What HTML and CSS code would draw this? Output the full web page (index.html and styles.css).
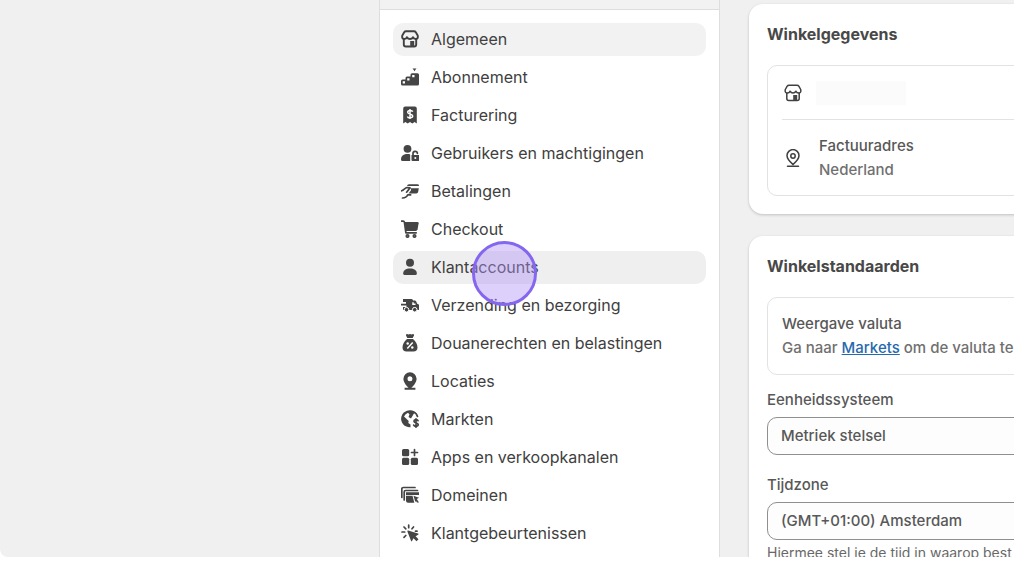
FILE: index.html
```html
<!DOCTYPE html>
<html lang="nl">
<head>
    <meta charset="UTF-8">
    <meta name="viewport" content="width=device-width, initial-scale=1.0">
    <title>Instellingen</title>
    <link rel="stylesheet" href="styles.css">
</head>
<body>

    <div class="frame">
        <!-- Navigatie -->
        <aside class="sidebar">
            <div class="sidebar-top"></div>
            <nav class="menu">
                <a class="item active" href="#">
                    <svg class="icon outline" viewBox="0 0 18 18"><path d="M5 1.200h8q1.200 0 1.800 1L16.700 5.500Q17.400 8.800 15 9q-2.200.2-3-1.800-1 1.800-3 1.800T6 7.200Q5.200 9.200 3 9 .6 8.800 1.300 5.500L3.200 2.200q.6-1 1.800-1z"/><path d="M2.800 9v5.500a2 2 0 0 0 2 2h8.400a2 2 0 0 0 2-2V9"/><path class="solid" d="M9.200 11h4v5.500h-4z"/></svg>
                    Algemeen
                </a>
                <a class="item" href="#">
                    <svg class="icon" viewBox="0 0 18 18"><path fill-rule="evenodd" d="M0 13q0-1.500 1.500-1.500h3V10q0-1.500 1.500-1.500h3.500V6.800q0-1.500 1.500-1.500h5.500q1.500 0 1.500 1.500V16q0 1.500-1.500 1.500h-15Q0 17.500 0 16zM1.700 13.200v2.300h2.300v-2.300zM6.200 10.200v2.300h2.300v-2.300zM11.200 7v2.300h2.300V7z"/><path d="M11.500.2q2 .8 4 0L13.500 3.200z"/></svg>
                    Abonnement
                </a>
                <a class="item" href="#">
                    <svg class="icon" viewBox="0 0 18 18"><path d="M2.200 2.500q0-2 2-2h9.600q2 0 2 2V17.500l-2.300-1.500L11.300 17.500 9 16l-2.300 1.500L4.500 16l-2.300 1.500z"/><path class="cut" d="M11.700 5.800C11.200 3.900 6.700 3.900 6.700 6.300c0 2.600 5 1.300 5 3.800 0 2.300-4.700 2.300-5.300.4M9 3v10"/></svg>
                    Facturering
                </a>
                <a class="item" href="#">
                    <svg class="icon" viewBox="0 0 18 18"><circle cx="6.500" cy="4.800" r="3.900"/><path d="M0 15.500C0 11.500 3 10 6.500 10c1.200 0 2 .1 2.700.5V17H1.500Q0 17 0 15.500z"/><path d="M10.500 11h7q.8 0 .8.800V16q0 1-1 1h-5.800q-1 0-1-1z"/><path class="line" d="M12 11V9.700a2.200 2.200 0 0 1 4.400-.4"/><circle class="hole" cx="14.300" cy="14" r="1"/></svg>
                    Gebruikers en machtigingen
                </a>
                <a class="item" href="#">
                    <svg class="icon" viewBox="0 0 18 18"><path d="M6 4Q6.300 2.200 8 2.200h8.500q1.700 0 1.400 1.800zM9.200 6.200h8.600l-.6 3.600q-.3 1.700-2 1.700H7.500l2.200-2.700q1-1.600-.5-2.600z"/><path class="line" d="M.6 8.800C3 7.800 4 5.800 6 5.500l3 .4-3.400 4.300M1.500 16c2.300 0 4.300-1 5.200-3.200h3"/></svg>
                    Betalingen
                </a>
                <a class="item" href="#">
                    <svg class="icon" viewBox="0 0 18 18"><path d="M3.500 2h13q1.300 0 1.100 1.300l-1 6q-.3 1.700-2 1.700H5z"/><path class="line" d="M.5 1.200h1.700q1 0 1.200 1l1.500 10.600h10.300"/><circle class="line" cx="6.500" cy="16" r="1.200"/><circle class="line" cx="13.500" cy="16" r="1.200"/></svg>
                    Checkout
                </a>
                <a class="item hover" href="#">
                    <svg class="icon" viewBox="0 0 18 18"><circle cx="9" cy="4.800" r="4"/><path d="M2.200 15.500C2.200 12 5 10.500 9 10.500s6.800 1.500 6.800 5q0 1.500-1.500 1.500H3.700q-1.500 0-1.500-1.500z"/></svg>
                    Klantaccounts
                    <span class="click-marker"></span>
                </a>
                <a class="item" href="#">
                    <svg class="icon" viewBox="0 0 18 18"><path d="M2 3h8.500Q12 3 12 4.500h1.800q1 0 1.400 1l1 2.200 1.500.8q.8.400.8 1.200v2.800q0 1.500-1.500 1.500H2V11h3.500V9.600H0V7.800h5V6H2z"/><path class="gap" d="M12 6.300v2h2.500"/><circle class="wheel" cx="5.500" cy="13.700" r="2.300"/><circle class="wheel" cx="13.700" cy="13.700" r="2.300"/></svg>
                    Verzending en bezorging
                </a>
                <a class="item" href="#">
                    <svg class="icon" viewBox="0 0 18 18"><path d="M5 1.500Q4.500 0 6 0q1.500.8 3 0 1.500.8 3 0 1.500 0 1 1.500L11.700 4H6.300zM6 5h6c2.500 2 4.500 5 4.500 8.500 0 2.500-1.500 4-4 4h-7c-2.500 0-4-1.500-4-4C1.500 10 3.500 7 6 5z"/><path class="gap" d="M11.700 8.500l-5.400 6"/><circle class="hole" cx="6.700" cy="9.500" r="1.200"/><circle class="hole" cx="11.300" cy="13.500" r="1.200"/></svg>
                    Douanerechten en belastingen
                </a>
                <a class="item" href="#">
                    <svg class="icon" viewBox="0 0 18 18"><path fill-rule="evenodd" d="M9 .2a6.600 6.600 0 0 1 6.600 6.600c0 4-4 8-5.200 9h4v1.900H3.600v-1.900h4c-1.200-1-5.200-5-5.200-9A6.600 6.600 0 0 1 9 .2zM9 4.300a2.500 2.500 0 1 0 0 5 2.500 2.500 0 0 0 0-5z"/></svg>
                    Locaties
                </a>
                <a class="item" href="#">
                    <svg class="icon" viewBox="0 0 18 18"><path fill-rule="evenodd" d="M13.800 2A8.500 8.500 0 1 0 9.500 17.200V14.500L7.300 13l.4-2L3 6.500Q4.300 3.700 7 2.800l1.500 1.700-1 2.500 2.500 1.500z"/><path class="line" d="M12.500 2C15 3 16 4.500 16.500 6.500"/><path class="line" d="M17 10.700c-.7-1.500-4-1.400-4 .6 0 2.200 4.200 1.200 4.200 3.400 0 2-3.700 2.100-4.500.4M15 8.800v8.500"/></svg>
                    Markten
                </a>
                <a class="item" href="#">
                    <svg class="icon" viewBox="0 0 18 18"><rect x="1" y="1" width="7.200" height="7.200" rx="1.500"/><rect x="1" y="9.800" width="7.200" height="7.200" rx="1.500"/><rect x="9.800" y="9.800" width="7.200" height="7.200" rx="1.500"/><path class="line" d="M13.500 1.500v6M10.500 4.500h6"/></svg>
                    Apps en verkoopkanalen
                </a>
                <a class="item" href="#">
                    <svg class="icon" viewBox="0 0 18 18"><path class="line" d="M.8 11.500V3q0-1.500 1.500-1.500H14M3.200 14V6q0-1.500 1.500-1.500H16.500"/><path d="M5 6.300h13V9H5zM5 9.800h6.500l1.800 7H7q-2 0-2-2zM12.500 9.800l5.500 2-2.200 1.200L18 16.500h-2l-1-1.500-.7 1z"/></svg>
                    Domeinen
                </a>
                <a class="item" href="#">
                    <svg class="icon" viewBox="0 0 18 18"><path d="M7.200 6.500l9.800 3q1.200.5.100 1.200l-2.500 1.600 2.900 3-2 2-3-3L11 17q-.6.900-1-.2L6.400 7.400Q6.200 6.200 7.200 6.500z"/><path class="line" d="M7.700 1v2.700M3 3l1.800 1.800M1 8h2.700M3 13.300l1.800-1.800M12.500 3l-1.500 1.800M14.500 7.200h1.500"/></svg>
                    Klantgebeurtenissen
                </a>
            </nav>
        </aside>

        <!-- Winkelinstellingen -->
        <main class="content">
            <section class="card">
                <h2>Winkelgegevens</h2>
                <div class="box">
                    <div class="row">
                        <svg class="icon outline" viewBox="0 0 18 18"><path d="M5 1.200h8q1.200 0 1.800 1L16.700 5.500Q17.400 8.800 15 9q-2.200.2-3-1.800-1 1.800-3 1.800T6 7.200Q5.200 9.200 3 9 .6 8.800 1.300 5.500L3.200 2.200q.6-1 1.800-1z"/><path d="M2.800 9v5.500a2 2 0 0 0 2 2h8.400a2 2 0 0 0 2-2V9"/><path class="solid" d="M9.200 11h4v5.500h-4z"/></svg>
                        <span class="placeholder"></span>
                    </div>
                    <div class="row address">
                        <svg class="icon outline" viewBox="0 0 18 18"><path d="M9 15.500c-2-1.700-6-5-6-8.900a6 6 0 0 1 12 0c0 3.900-4 7.200-6 8.900zM3.500 17.200h11"/><circle cx="9" cy="7" r="2.200"/></svg>
                        <div>
                            Factuuradres
                            <div class="subdued">Nederland</div>
                        </div>
                    </div>
                </div>
            </section>

            <section class="card">
                <h2>Winkelstandaarden</h2>
                <div class="box currency">
                    Weergave valuta
                    <div class="subdued">Ga naar <a href="#">Markets</a> om de valuta te</div>
                </div>
                <div class="field">
                    <label for="unit">Eenheidssysteem</label>
                    <select id="unit">
                        <option>Metriek stelsel</option>
                    </select>
                </div>
                <div class="field">
                    <label for="timezone">Tijdzone</label>
                    <select id="timezone">
                        <option>(GMT+01:00) Amsterdam</option>
                    </select>
                    <p class="help">Hiermee stel je de tijd in waarop best</p>
                </div>
            </section>
        </main>
    </div>

</body>
</html>
```
FILE: styles.css
```css
* {
    box-sizing: border-box;
}
body {
    font-family: Inter, 'Liberation Sans', sans-serif;
    font-size: 16px;
    line-height: 24px;
    color: #585858;
    background-color: #ffffff;
    margin: 0;
}
.frame {
    display: grid;
    grid-template-columns: 379px 341px minmax(0, 1fr);
    height: calc(100vh - 8px);
    margin-right: 10px;
    background-color: #f0f0f0;
    border-bottom-left-radius: 8px;
    overflow: hidden;
}
.sidebar {
    grid-column: 2;
    background-color: #ffffff;
    border-left: 1px solid #dedede;
    border-right: 1px solid #dedede;
    overflow: hidden;
}
.sidebar-top {
    height: 10px;
    background-color: #f2f2f2;
    border-bottom: 1px solid #dedede;
}
.menu {
    display: flex;
    flex-direction: column;
    gap: 5px;
    padding: 13px;
}
.item {
    position: relative;
    display: flex;
    align-items: center;
    gap: 12px;
    min-height: 33px;
    padding: 0 8px 1px;
    border-radius: 10px;
    color: #404040;
    text-decoration: none;
}
.item.active {
    background-color: #f2f2f2;
}
.item.hover {
    background-color: #efefef;
}
.icon {
    flex: none;
    width: 18px;
    height: 18px;
    fill: #454545;
}
.outline {
    fill: none;
    stroke: #404040;
    stroke-width: 1.9;
    stroke-linejoin: round;
    stroke-linecap: round;
}
.outline .solid {
    fill: #454545;
    stroke: none;
}
.line {
    fill: none;
    stroke: #454545;
    stroke-width: 1.7;
    stroke-linecap: round;
    stroke-linejoin: round;
}
.cut, .gap {
    fill: none;
    stroke: #ffffff;
    stroke-width: 1.5;
}
.hole {
    fill: #ffffff;
}
.wheel {
    fill: #454545;
    stroke: #ffffff;
    stroke-width: 1;
}
/* Klikmarkering over het menu */
.click-marker {
    position: absolute;
    top: -10px;
    left: 79px;
    z-index: 1;
    width: 65px;
    height: 65px;
    border: 3px solid #8467ee;
    border-radius: 50%;
    background-color: rgba(173, 145, 248, 0.42);
}
.content {
    display: flex;
    flex-direction: column;
    gap: 22px;
    min-width: 480px;
    padding: 4px 0 0 29px;
    font-size: 15px;
    font-weight: 500;
}
.card {
    padding: 18px;
    background-color: #ffffff;
    border-radius: 14px;
    box-shadow: 0 1px 3px rgba(0, 0, 0, 0.2);
    white-space: nowrap;
}
h2 {
    margin: 0 0 19px;
    font-size: 16px;
    line-height: 24px;
    font-weight: 700;
    color: #484848;
}
.box {
    border: 1px solid #e2e2e2;
    border-radius: 10px;
    padding: 0 14px;
}
.row {
    display: flex;
    align-items: center;
    gap: 14px;
    min-height: 53px;
    padding-left: 2px;
}
.row .icon {
    stroke-width: 1.5;
}
.address {
    gap: 17px;
    min-height: 76px;
    border-top: 1px solid #e2e2e2;
}
.placeholder {
    width: 90px;
    height: 24px;
    background-color: #fbfbfb;
}
.subdued {
    color: #707070;
}
.subdued a {
    color: #256aae;
}
.currency {
    padding: 14px;
}
.field {
    margin-top: 13px;
}
.field + .field {
    margin-top: 18px;
}
.field label {
    display: block;
}
.field select {
    display: block;
    width: 100%;
    height: 38px;
    margin-top: 5px;
    padding: 0 13px;
    appearance: none;
    border: 1px solid #8f8f8f;
    border-radius: 10px;
    background-color: #fdfdfd;
    color: #585858;
    font: inherit;
}
.help {
    margin: 1px 0 0;
    font-size: 14px;
    font-weight: 400;
    color: #686868;
}
```
